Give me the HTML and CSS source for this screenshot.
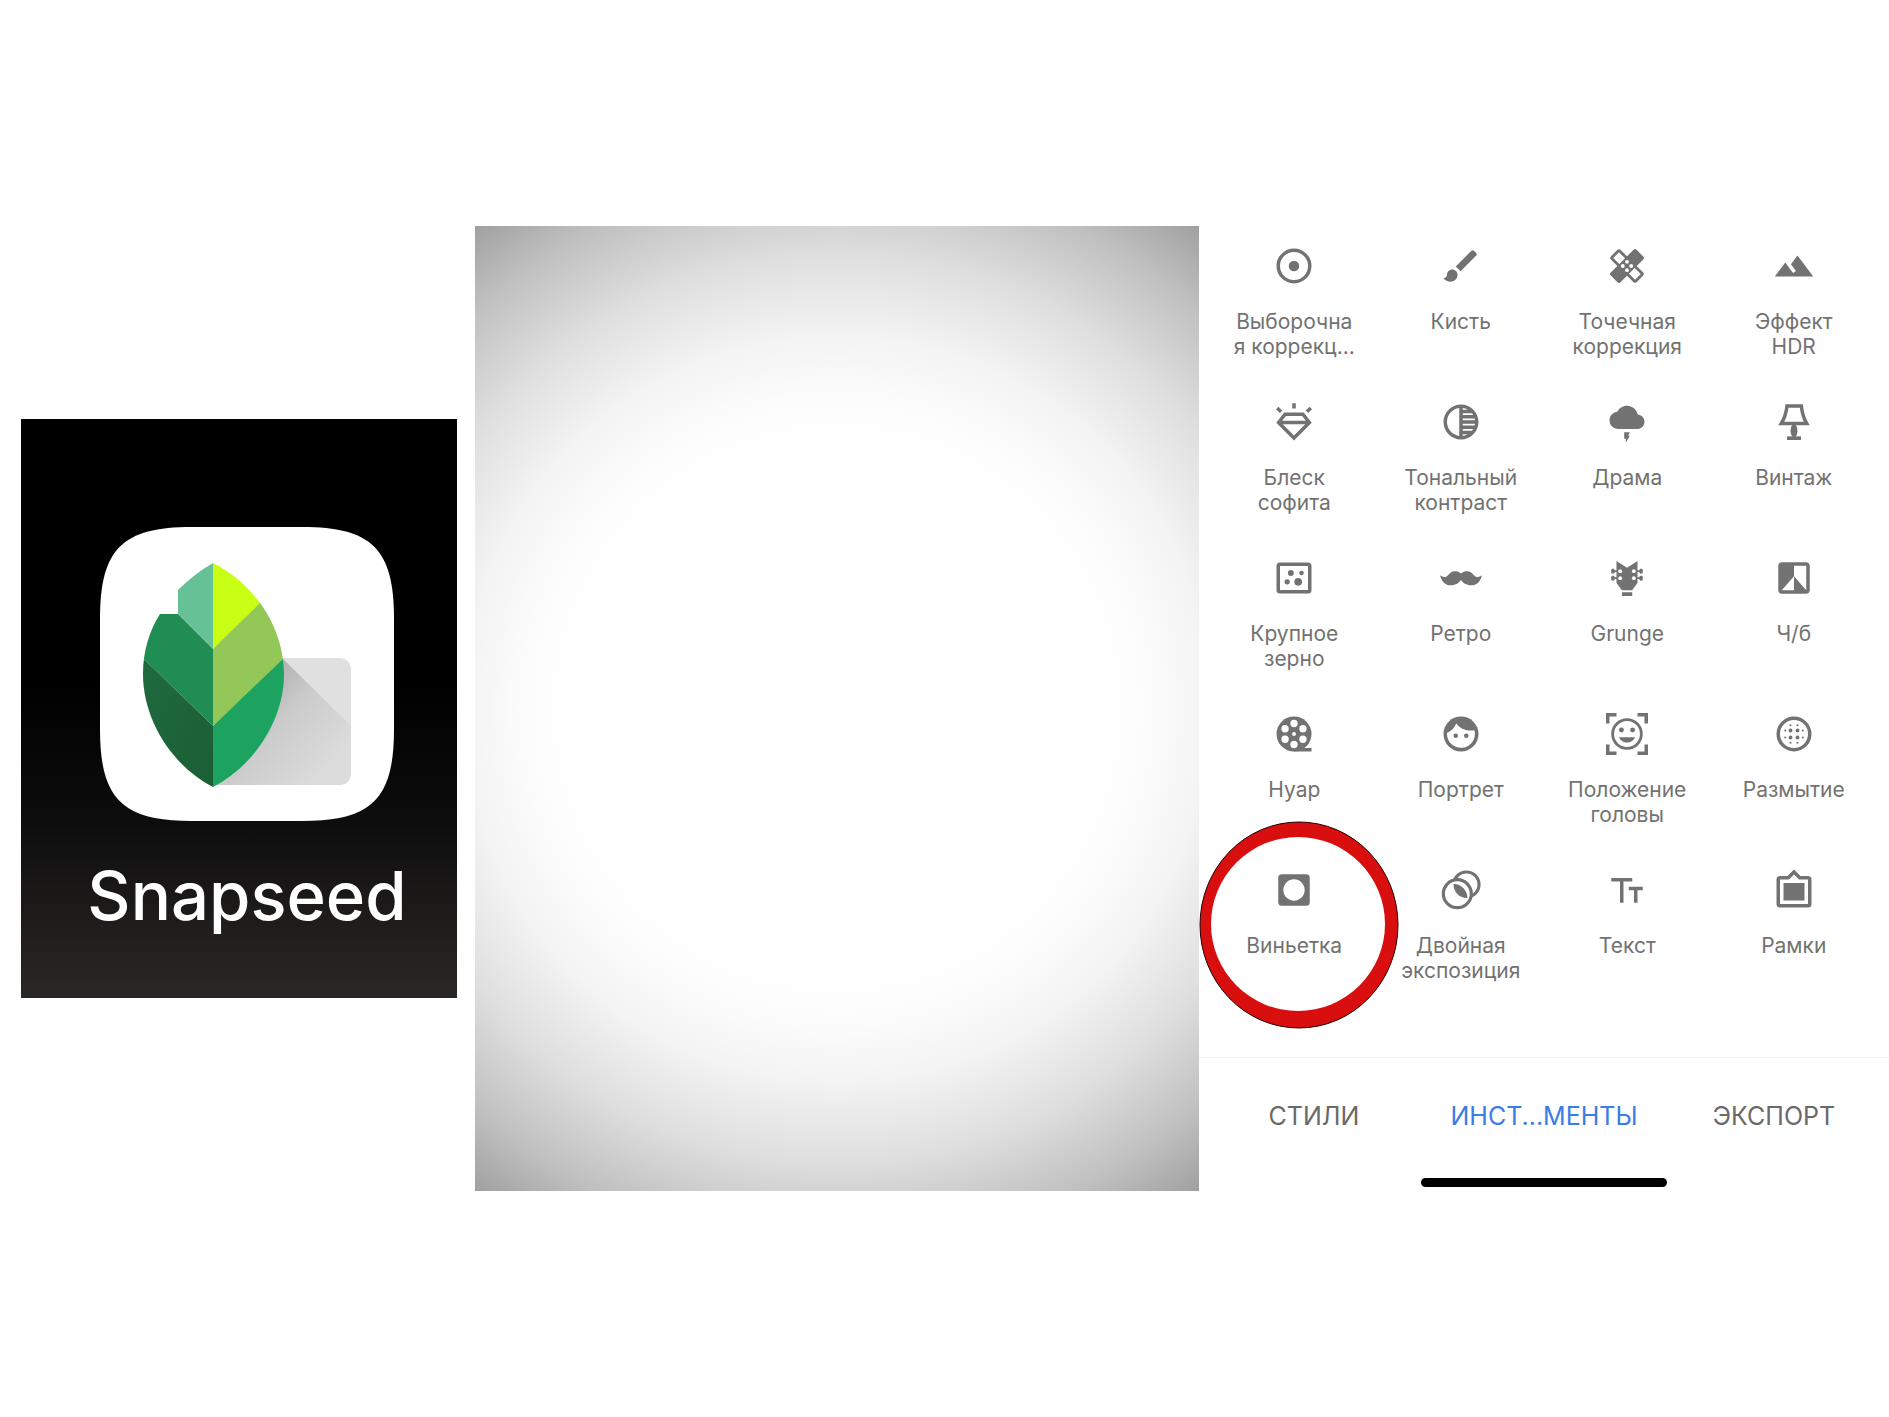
FILE: index.html
```html
<!DOCTYPE html>
<html lang="ru">
<head>
<meta charset="utf-8">
<meta name="viewport" content="width=device-width, initial-scale=1">
<title>Snapseed — Виньетка</title>
<link rel="stylesheet" href="styles.css">
</head>
<body>
<main class="board">
  <section class="app-col">
    <div class="app">
      <svg class="app-icon" viewBox="0 0 294 294" aria-hidden="true">
        <defs>
          <linearGradient id="shade" gradientUnits="userSpaceOnUse" x1="160" y1="165" x2="235" y2="235">
            <stop offset="0" stop-color="#b4b4b4"/><stop offset=".35" stop-color="#cbcbcb"/><stop offset="1" stop-color="#dcdcdc"/>
          </linearGradient>
          <linearGradient id="dark" x1="0" y1="0" x2="1" y2="1">
            <stop offset="0" stop-color="#216b40"/><stop offset="1" stop-color="#1a5e34"/>
          </linearGradient>
          <clipPath id="leaf"><path d="M113 36C155 57 184 101 184 147C184 195 152 240 113 260C74 240 43 195 43 147C43 125 49 104 60 87H78V63Q94 47 113 36Z"/></clipPath>
        </defs>
        <path fill="#fff" d="M0 92C0 22 22 0 92 0H202C272 0 294 22 294 92V202C294 272 272 294 202 294H92C22 294 0 272 0 202Z"/>
        <path fill="#e0e0e0" d="M150 131H238Q251 131 251 144V245Q251 258 238 258H113Z"/>
        <path fill="url(#shade)" d="M182 131L251 199V245Q251 258 238 258H113Z"/>
        <g clip-path="url(#leaf)">
          <path fill="#66c296" d="M30 30H113V122L78 87L60 60Z"/>
          <path fill="#c8ff14" d="M113 30H190V51L113 122Z"/>
          <path fill="#93c858" d="M113 122L159 77L200 40V118L113 199Z"/>
          <path fill="#1ba35f" d="M113 199L183 132L200 116V270H113Z"/>
          <path fill="#208e53" d="M30 87H78L113 122V199L45 133L30 119Z"/>
          <path fill="url(#dark)" d="M30 119L45 133L113 199V270H30Z"/>
        </g>
      </svg>
      <p class="app-name">Snapseed</p>
    </div>
  </section>

  <div class="photo" role="img" aria-label="Виньетка"></div>

  <section class="editor">
    <div class="tools">
      <button class="tool" type="button">
        <svg class="icon" viewBox="0 0 24 24"><circle class="line" cx="12" cy="12" r="9"/><circle cx="12" cy="12" r="3"/></svg>
        <span>Выборочна<br>я коррекц...</span>
      </button>
      <button class="tool" type="button">
        <svg class="icon" viewBox="0 0 24 24"><path d="M7 14c-1.66 0-3 1.34-3 3 0 1.31-1.16 2-2 2 .92 1.22 2.49 2 4 2 2.21 0 4-1.79 4-4 0-1.66-1.34-3-3-3zm13.71-9.37l-1.34-1.34c-.39-.39-1.02-.39-1.41 0L9 12.25 11.75 15l8.96-8.96c.39-.39.39-1.02 0-1.41z"/></svg>
        <span>Кисть</span>
      </button>
      <button class="tool" type="button">
        <svg class="icon" viewBox="0 0 24 24"><rect class="line thin" x="2.4" y="8.9" width="19.2" height="6.2" rx=".6" transform="rotate(45 12 12)"/><rect x="1.6" y="8.1" width="20.8" height="7.8" rx="1" transform="rotate(-45 12 12)"/><g fill="#fff"><circle cx="12" cy="9.6" r="1.1"/><circle cx="9.6" cy="12" r="1.1"/><circle cx="14.4" cy="12" r="1.1"/><circle cx="12" cy="14.4" r="1.1"/></g></svg>
        <span>Точечная<br>коррекция</span>
      </button>
      <button class="tool" type="button">
        <svg class="icon" viewBox="0 0 24 24"><path d="M14 6l-3.75 5 2.85 3.8-1.6 1.2C9.81 13.75 7 10 7 10l-6 8h22L14 6z"/></svg>
        <span>Эффект<br>HDR</span>
      </button>

      <button class="tool" type="button">
        <svg class="icon" viewBox="0 0 24 24"><path class="line" d="M6.9 7.5H17.1L20.8 12.3L12 21.2L3.2 12.3ZM3.2 12.3H20.8M12 1.3V4.3M2.4 4L4.6 6.2M21.6 4L19.4 6.2"/></svg>
        <span>Блеск<br>софита</span>
      </button>
      <button class="tool" type="button">
        <svg class="icon" viewBox="0 0 24 24"><path d="M12 2C6.48 2 2 6.48 2 12s4.48 10 10 10 10-4.48 10-10S17.52 2 12 2zm-1 17.93c-3.94-.49-7-3.85-7-7.93s3.05-7.44 7-7.93v15.86zm2-15.86c1.03.13 2 .45 2.87.93H13v-.93zM13 7h5.24c.25.31.48.65.68 1H13V7zm0 3h6.74c.08.33.15.66.19 1H13v-1zm0 9.93V19h2.87c-.87.48-1.84.8-2.87.93zM18.24 17H13v-1h5.92c-.2.35-.43.69-.68 1zm1.5-3H13v-1h6.93c-.04.34-.11.67-.19 1z"/></svg>
        <span>Тональный<br>контраст</span>
      </button>
      <button class="tool" type="button">
        <svg class="icon" viewBox="0 0 24 24"><path transform="translate(2 -.6) scale(.833)" d="M19.35 10.04C18.67 6.59 15.64 4 12 4 9.11 4 6.6 5.64 5.35 8.04 2.34 8.36 0 10.91 0 14c0 3.31 2.69 6 6 6h13c2.76 0 5-2.24 5-5 0-2.64-2.05-4.78-4.65-4.96z"/><path d="M10.4 17.9H13.6L12.7 19.8H13.6L11.3 23.9V21.6H10.4Z"/></svg>
        <span>Драма</span>
      </button>
      <button class="tool" type="button">
        <svg class="icon" viewBox="0 0 24 24"><path class="line" d="M8 2.8H16.2C16.6 7 17.8 10.3 19.3 12.9H4.7C6.3 10.3 7.6 7 8 2.8Z"/><ellipse cx="12" cy="17" rx="2" ry="3.7"/><path d="M8 20.2H16V22.3H8Z"/></svg>
        <span>Винтаж</span>
      </button>

      <button class="tool" type="button">
        <svg class="icon" viewBox="0 0 24 24"><rect class="line" x="3" y="4.2" width="18" height="15.6" rx="1"/><circle cx="10.2" cy="9.1" r="1.7"/><circle cx="16.3" cy="9.1" r="1.3"/><circle cx="8.1" cy="14.2" r="1.5"/><circle cx="14.4" cy="14.2" r="2.2"/></svg>
        <span>Крупное<br>зерно</span>
      </button>
      <button class="tool" type="button">
        <svg class="icon" viewBox="0 0 24 24"><path d="M12 9.4C10.9 8.4 9.8 8.1 8.6 8.1C6.6 8.1 5.6 9.3 4.4 10.5C3.1 11.8 1.6 11.6 0 10.4C.9 14 3 16.2 6.2 16.2C9 16.2 10.9 14.8 12 13.2C13.1 14.8 15 16.2 17.8 16.2C21 16.2 23.1 14 24 10.4C22.4 11.6 20.9 11.8 19.6 10.5C18.4 9.3 17.4 8.1 15.4 8.1C14.2 8.1 13.1 8.4 12 9.4Z"/></svg>
        <span>Ретро</span>
      </button>
      <button class="tool" type="button">
        <svg class="icon" viewBox="0 0 24 24"><path d="M6 2.3L12 6.2L18 2.3V14.8L14.9 19H9.1L6 14.8ZM9.1 20.1H15V22.3H9.1ZM4 7.6H7V8.6H4ZM4 11.6H7V12.6H4ZM17 7.6H20V8.6H17ZM17 11.6H20V12.6H17Z"/><rect x="3" y="6.7" width="1.9" height="2.8" rx=".8"/><rect x="3" y="10.7" width="1.9" height="2.8" rx=".8"/><rect x="19.1" y="6.7" width="1.9" height="2.8" rx=".8"/><rect x="19.1" y="10.7" width="1.9" height="2.8" rx=".8"/><g fill="#fff"><circle cx="8.1" cy="8.1" r="1.1"/><circle cx="8.1" cy="12.1" r="1.1"/><circle cx="15.9" cy="8.1" r="1.1"/><circle cx="15.9" cy="12.1" r="1.1"/></g></svg>
        <span>Grunge</span>
      </button>
      <button class="tool" type="button">
        <svg class="icon" viewBox="0 0 24 24"><path d="M19 3H5c-1.1 0-2 .9-2 2v14c0 1.1.9 2 2 2h14c1.1 0 2-.9 2-2V5c0-1.1-.9-2-2-2zm0 16l-7-8v8H5l7-8V5h7v14z"/></svg>
        <span>Ч/б</span>
      </button>

      <button class="tool" type="button">
        <svg class="icon" viewBox="0 0 24 24"><circle cx="12" cy="12" r="10"/><path d="M12 20H22V22H12Z"/><g fill="#fff"><circle cx="12" cy="12" r="1.1"/><circle cx="12" cy="6" r="2.1"/><circle cx="12" cy="18" r="2.1"/><circle cx="6.9" cy="9" r="2.1"/><circle cx="17.1" cy="9" r="2.1"/><circle cx="6.9" cy="15" r="2.1"/><circle cx="17.1" cy="15" r="2.1"/></g></svg>
        <span>Нуар</span>
      </button>
      <button class="tool" type="button">
        <svg class="icon" viewBox="0 0 24 24"><circle cx="12" cy="12" r="10"/><path fill="#fff" d="M4 11.4C6.4 10.4 8.3 8.4 9.3 6C11.6 9.1 15.4 10.6 19.7 9.8A8 8 0 1 1 4 11.4Z"/><circle cx="9" cy="13" r="1.3"/><circle cx="15" cy="13" r="1.3"/></svg>
        <span>Портрет</span>
      </button>
      <button class="tool" type="button">
        <svg class="icon" viewBox="0 0 24 24"><path class="line" d="M1 6V1H6M18 1H23V6M23 18V23H18M6 23H1V18"/><circle class="line thin" cx="12" cy="12" r="8.2"/><circle cx="8.8" cy="9.7" r="1.4"/><circle cx="15.2" cy="9.7" r="1.4"/><path d="M7.4 13.9H16.6C15.8 15.8 14.2 16.9 12 16.9C9.8 16.9 8.2 15.8 7.4 13.9Z"/></svg>
        <span>Положение<br>головы</span>
      </button>
      <button class="tool" type="button">
        <svg class="icon" viewBox="0 0 24 24"><circle class="line" cx="12" cy="12" r="9"/><circle cx="10" cy="10" r="1.1"/><circle cx="14" cy="10" r="1.1"/><circle cx="10" cy="14" r="1.1"/><circle cx="14" cy="14" r="1.1"/><circle cx="7" cy="10" r=".6"/><circle cx="7" cy="14" r=".6"/><circle cx="17" cy="10" r=".6"/><circle cx="17" cy="14" r=".6"/><circle cx="10" cy="7" r=".6"/><circle cx="14" cy="7" r=".6"/><circle cx="10" cy="17" r=".6"/><circle cx="14" cy="17" r=".6"/></svg>
        <span>Размытие</span>
      </button>

      <button class="tool" type="button">
        <svg class="icon" viewBox="0 0 24 24"><path fill-rule="evenodd" d="M5 3H19Q21 3 21 5V19Q21 21 19 21H5Q3 21 3 19V5Q3 3 5 3ZM12 5.9A6.1 6.1 0 1 0 12 18.1A6.1 6.1 0 1 0 12 5.9Z"/></svg>
        <span>Виньетка</span>
        <svg class="ring" viewBox="0 0 200 208" aria-hidden="true"><path fill="#d90f0f" fill-rule="evenodd" d="M1 104A99 103 0 1 1 199 104A99 103 0 1 1 1 104ZM12 103A87 87 0 1 0 186 103A87 87 0 1 0 12 103Z"/><ellipse cx="100" cy="104" rx="99" ry="103" fill="none" stroke="#200"/></svg>
      </button>
      <button class="tool" type="button">
        <svg class="icon" viewBox="0 0 24 24"><circle class="line medium" cx="15.1" cy="8.9" r="7.2"/><circle class="line medium lens" cx="9.9" cy="14.1" r="8"/><path d="M7.7 8.6C11.8 8.4 15.6 12 15.7 16.7C11 16.6 7.6 13 7.7 8.6Z"/></svg>
        <span>Двойная<br>экспозиция</span>
      </button>
      <button class="tool" type="button">
        <svg class="icon" viewBox="0 0 24 24"><path d="M3 5.2H15V7.2H10V19.3H8V7.2H3ZM13 10.2H21V12.2H18V19.3H16V12.2H13Z"/></svg>
        <span>Текст</span>
      </button>
      <button class="tool" type="button">
        <svg class="icon" viewBox="0 0 24 24"><path class="line" d="M4 5H8.7L12 1.7L15.3 5H20Q21 5 21 6V20Q21 21 20 21H4Q3 21 3 20V6Q3 5 4 5Z"/><path d="M6 8H18V18H6Z"/></svg>
        <span>Рамки</span>
      </button>
    </div>

    <nav class="tabs">
      <button class="tab" type="button">СТИЛИ</button>
      <button class="tab active" type="button">ИНСТ...МЕНТЫ</button>
      <button class="tab" type="button">ЭКСПОРТ</button>
    </nav>
    <div class="home-bar"></div>
  </section>
</main>
</body>
</html>
```
FILE: styles.css
```css
* {
  box-sizing: border-box;
}

body {
  margin: 0;
  background: #fff;
  color: #727272;
  font-family: Inter, "Liberation Sans", sans-serif;
}

.board {
  display: grid;
  grid-template-columns: 454fr 724fr 690fr;
  align-items: center;
  min-height: 100vh;
  padding-left: 21px;
}

.app-col {
  padding-right: 18px;
}

.app {
  display: flex;
  flex-direction: column;
  align-items: center;
  aspect-ratio: 436 / 579;
  padding: 108px 0 0 16px;
  background: linear-gradient(#000 45%, #0e0d0e 70%, #1d1b1a 85%, #2a2726);
}

.app-icon {
  width: 294px;
  height: 294px;
}

.app-name {
  margin: 33px 0 0;
  color: #fff;
  font-size: 67px;
  font-weight: 500;
  line-height: 84px;
}

.photo {
  aspect-ratio: 724 / 965;
  background: radial-gradient(circle farthest-corner, #fff 42%, #fcfcfc 52%, #f3f3f3 62%, #dfdfdf 75%, #c0c0c0 89%, #a0a0a0 100%);
}

.editor {
  display: flex;
  flex-direction: column;
}

.tools {
  display: grid;
  grid-template-columns: repeat(4, 1fr);
  row-gap: 42px;
  padding: 19px 12px 74px;
}

.tool {
  position: relative;
  display: flex;
  flex-direction: column;
  align-items: center;
  gap: 22px;
  min-height: 114px;
  padding: 0;
  border: 0;
  background: none;
  color: inherit;
  font: 400 21px/25px Inter, "Liberation Sans", sans-serif;
  white-space: nowrap;
}

.icon {
  width: 42px;
  height: 42px;
  fill: #727272;
}

.line {
  fill: none;
  stroke: #727272;
  stroke-width: 2;
}

.thin {
  stroke-width: 1.6;
}

.medium {
  stroke-width: 1.8;
}

.lens {
  fill: #fff;
}

.ring {
  position: absolute;
  top: -48px;
  left: 50%;
  width: 200px;
  height: 208px;
  margin-left: -95px;
  pointer-events: none;
}

.tabs {
  display: grid;
  grid-template-columns: repeat(3, 1fr);
  padding: 43px 0 47px;
  border-top: 1px solid #f3f3f3;
}

.tab {
  padding: 0;
  border: 0;
  background: none;
  color: #6a6a6a;
  font: 400 25px/30px Inter, "Liberation Sans", sans-serif;
}

.active {
  color: #3b7ce6;
}

.home-bar {
  align-self: center;
  width: 246px;
  height: 9px;
  margin-bottom: 4px;
  border-radius: 5px;
  background: #000;
}
```
